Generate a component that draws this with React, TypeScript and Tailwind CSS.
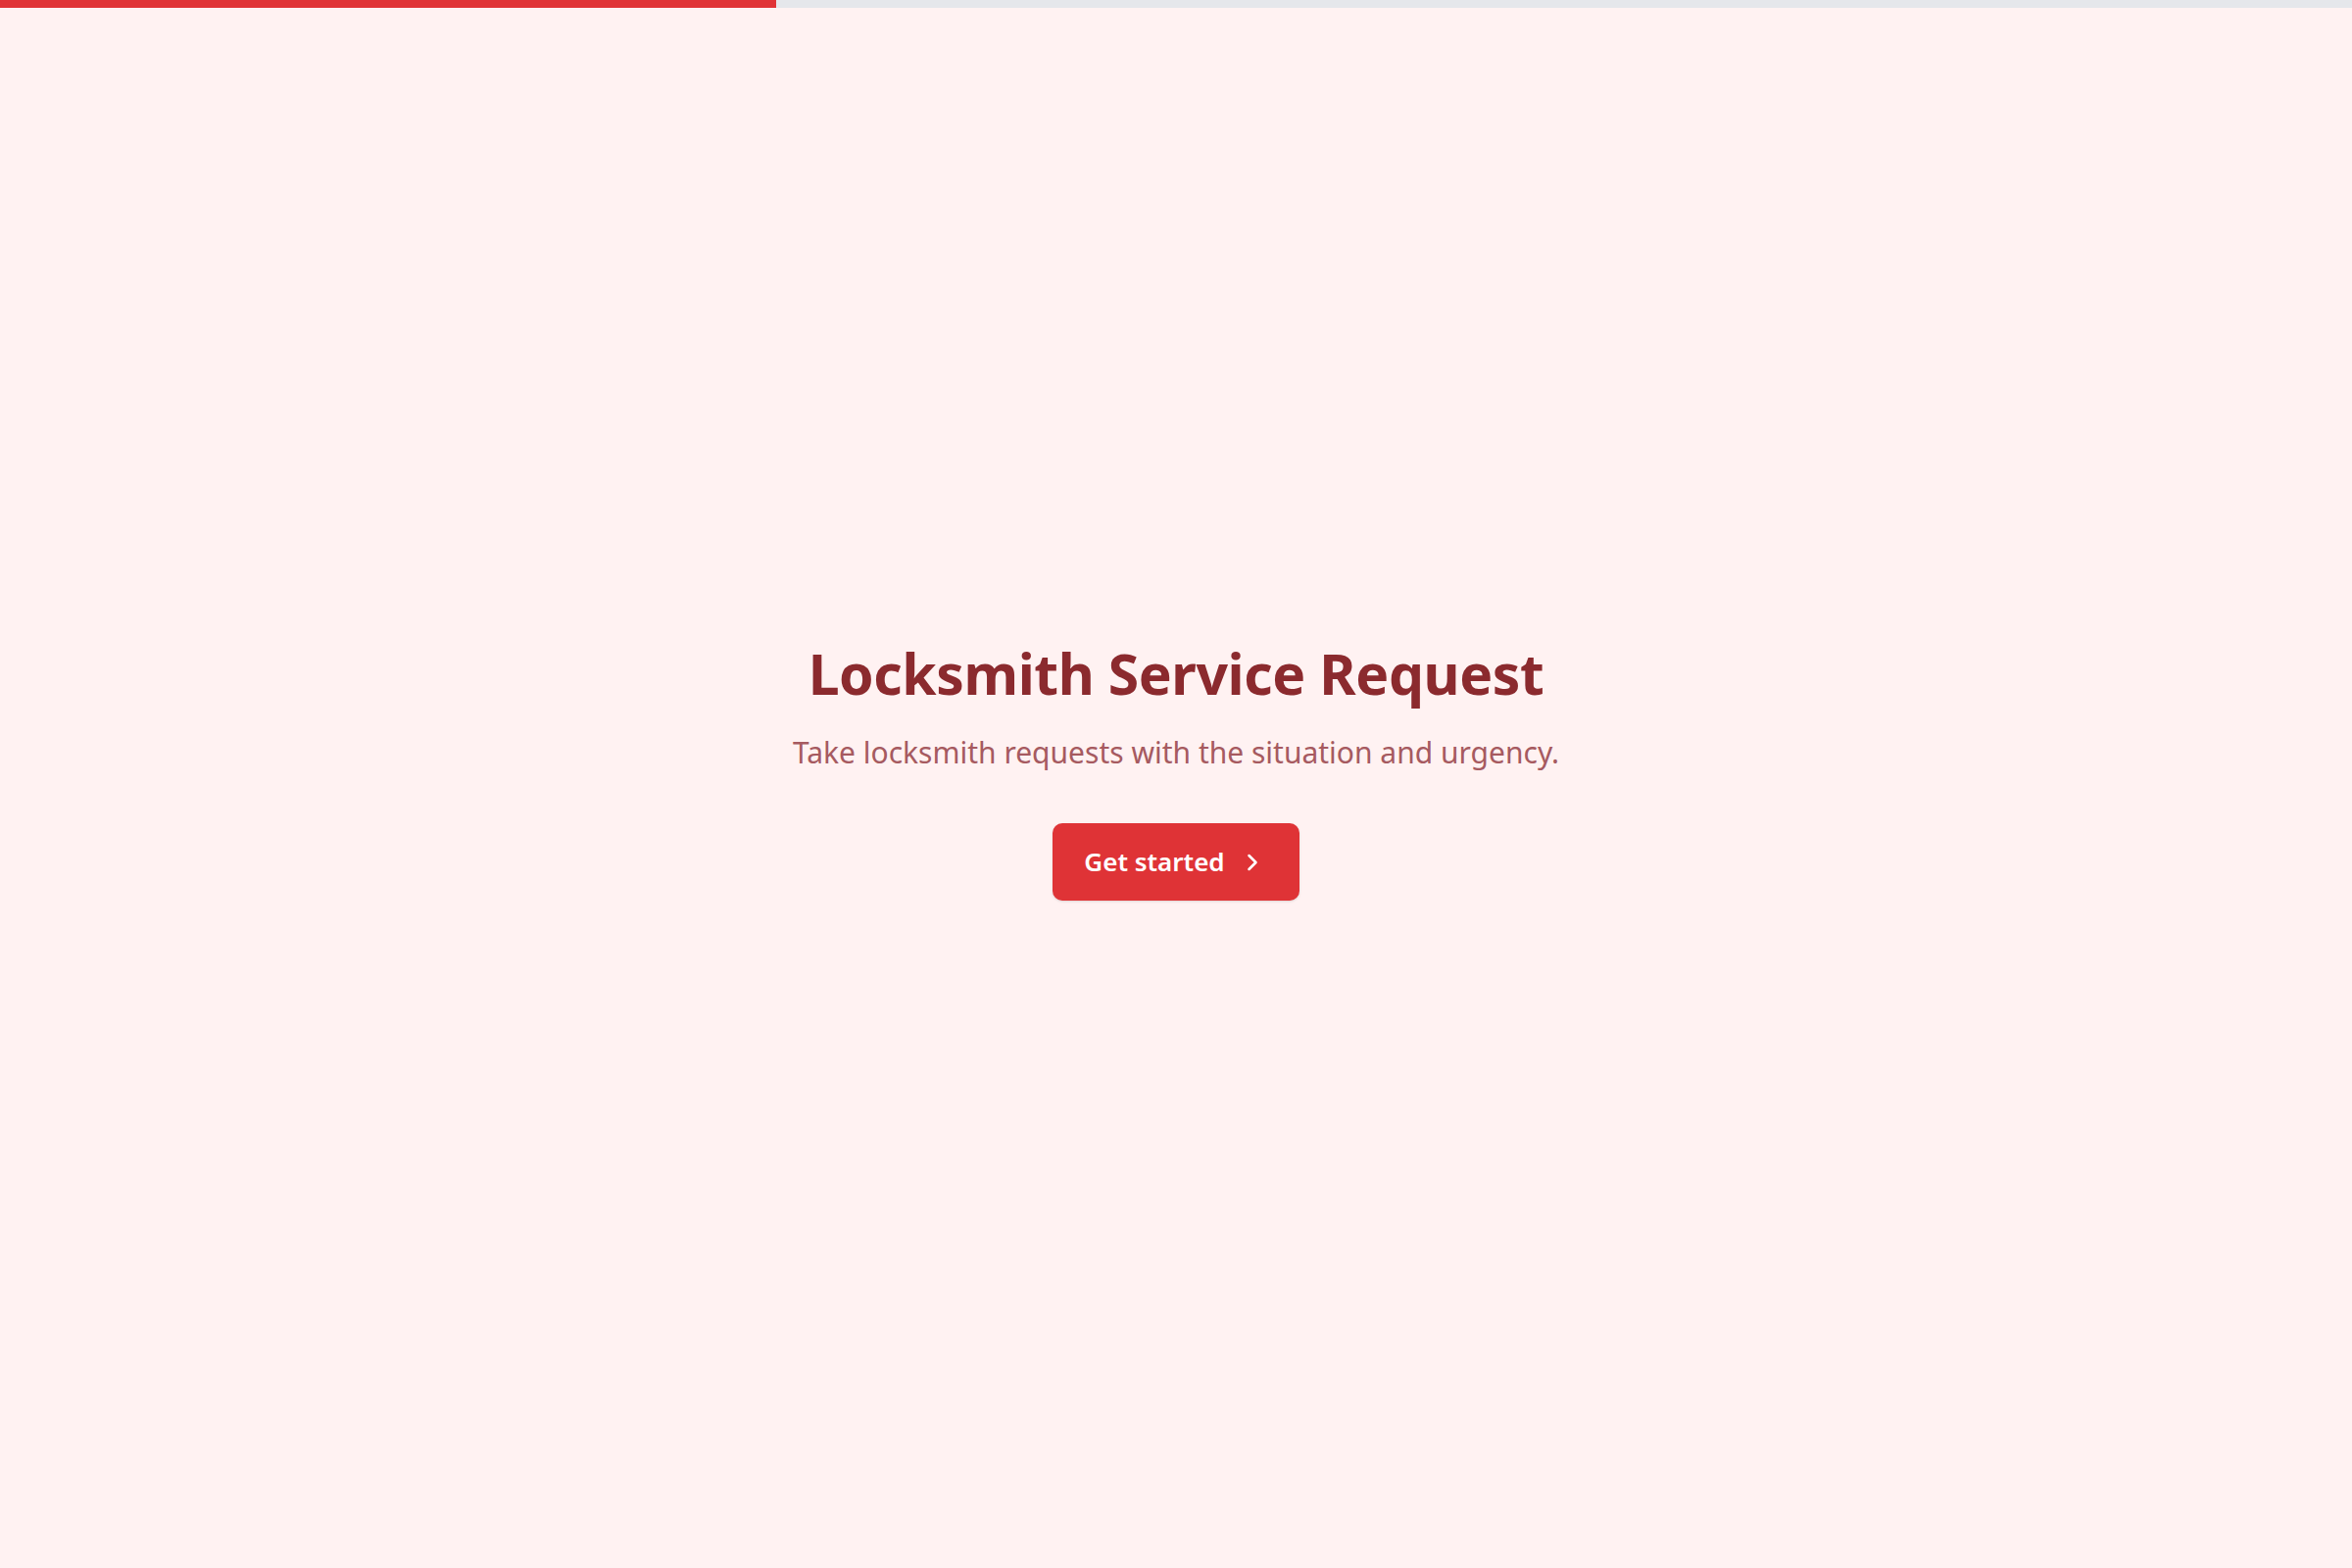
import React from "react";
import { ChevronRight } from "lucide-react";

export default function App() {
  return (
    <div
      className="min-h-screen w-full flex flex-col bg-[#fff2f2]"
      style={{ fontFamily: '"Noto Sans", "Open Sans", sans-serif' }}
    >
      <div className="h-[8px] w-full bg-[#e5e7eb]">
        <div className="h-full w-[33%] bg-[#e03437]" />
      </div>
      <main className="flex-1 flex items-center justify-center pb-[30px]">
        <div className="flex flex-col items-center text-center">
          <h1 className="text-[57px] leading-none font-bold text-[#8b2a2e] tracking-[-0.4px]">
            Locksmith Service Request
          </h1>
          <p className="mt-[32px] text-[30px] leading-[40px] text-[#a65a60]">
            Take locksmith requests with the situation and urgency.
          </p>
          <button className="mt-[52px] h-[79px] pl-[32px] pr-[34px] rounded-[10px] bg-[#df3336] text-white flex items-center gap-[14px] text-[26px] font-semibold shadow-sm">
            <span>Get started</span>
            <ChevronRight size={28} strokeWidth={2.2} />
          </button>
        </div>
      </main>
    </div>
  );
}
